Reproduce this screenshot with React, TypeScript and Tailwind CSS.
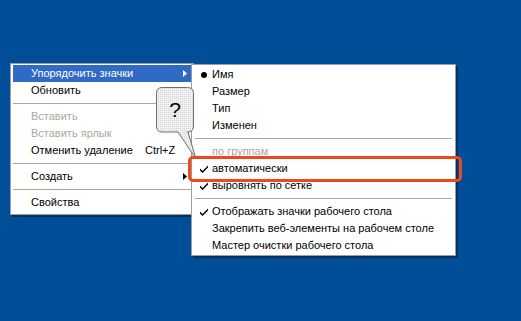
import type { ReactNode } from 'react';

type Item =
  | { sep: true }
  | { label: string; shortcut?: string; disabled?: boolean; submenu?: boolean; active?: boolean };

const desktopMenu: Item[] = [
  { label: 'Упорядочить значки', submenu: true, active: true },
  { label: 'Обновить' },
  { sep: true },
  { label: 'Вставить', disabled: true },
  { label: 'Вставить ярлык', disabled: true },
  { label: 'Отменить удаление', shortcut: 'Ctrl+Z' },
  { sep: true },
  { label: 'Создать', submenu: true },
  { sep: true },
  { label: 'Свойства' },
];

type SubItem = { sep: true } | { label: string; mark?: 'dot' | 'check'; disabled?: boolean };

const arrangeMenu: SubItem[] = [
  { label: 'Имя', mark: 'dot' },
  { label: 'Размер' },
  { label: 'Тип' },
  { label: 'Изменен' },
  { sep: true },
  { label: 'по группам', disabled: true },
  { label: 'автоматически', mark: 'check' },
  { label: 'выровнять по сетке', mark: 'check' },
  { sep: true },
  { label: 'Отображать значки рабочего стола', mark: 'check' },
  { label: 'Закрепить веб-элементы на рабочем столе' },
  { label: 'Мастер очистки рабочего стола' },
];

function Arrow({ white }: { white?: boolean }) {
  return (
    <svg width="4" height="7" viewBox="0 0 4 7" className="shrink-0">
      <path d="M0 0 L4 3.5 L0 7 Z" fill={white ? '#ffffff' : '#000000'} />
    </svg>
  );
}

function Check() {
  return (
    <svg width="8" height="8" viewBox="0 0 8 8">
      <path d="M0 3.5 L2.5 6 L8 0.5 L8 2.5 L2.5 8 L0 5.5 Z" fill="#000" />
    </svg>
  );
}

function Separator({ className }: { className: string }) {
  return (
    <div className="h-[9px] flex items-center">
      <div className={`h-px bg-[#aca899] ${className}`} />
    </div>
  );
}

function Menu({ className, children }: { className: string; children: ReactNode }) {
  return (
    <div
      className={`absolute bg-white border border-[#9d9d9d] shadow-[2px_2px_0_rgba(0,0,0,0.35)] ${className}`}
    >
      {children}
    </div>
  );
}

export default function App() {
  return (
    <div
      className="relative w-[521px] h-[321px] bg-[#004e98] overflow-hidden text-[11px] text-black"
      style={{ fontFamily: '"Liberation Sans", Arial, sans-serif' }}
    >
      {/* desktop context menu */}
      <Menu className="left-[10px] top-[63px] w-[184px] px-[2px] pt-[1px] pb-[3px]">
        {desktopMenu.map((item, i) =>
          'sep' in item ? (
            <Separator key={i} className="w-full" />
          ) : (
            <div
              key={i}
              className={`h-[17px] flex items-center pl-[18px] pr-[4px] ${
                item.active ? 'bg-[#316ac5] text-white' : ''
              } ${item.disabled ? 'text-[#aca899]' : ''}`}
            >
              <span className="w-[114px] shrink-0 whitespace-nowrap">{item.label}</span>
              <span className="flex-1 whitespace-nowrap">{item.shortcut}</span>
              {item.submenu && <Arrow white={item.active} />}
            </div>
          )
        )}
      </Menu>

      {/* arrange icons submenu */}
      <Menu className="left-[191px] top-[64px] w-[265px] px-[3px] py-[1px]">
        {arrangeMenu.map((item, i) =>
          'sep' in item ? (
            <Separator key={i} className="w-full" />
          ) : (
            <div
              key={i}
              className={`h-[17px] flex items-center whitespace-nowrap ${
                item.disabled ? 'text-[#aca899]' : ''
              }`}
            >
              <span className="w-[17px] flex justify-center items-center shrink-0">
                {item.mark === 'dot' && <span className="w-[6px] h-[6px] rounded-full bg-black" />}
                {item.mark === 'check' && <Check />}
              </span>
              <span>{item.label}</span>
            </div>
          )
        )}
      </Menu>

      {/* red highlight frame */}
      <div className="absolute left-[188px] top-[156px] w-[274px] h-[26px] border-[3px] border-[#f2461c] rounded-[5px]" />

      {/* callout bubble */}
      <svg className="absolute left-[150px] top-[82px]" width="52" height="82" viewBox="150 82 52 82">
        <defs>
          <pattern id="dots" width="2" height="2" patternUnits="userSpaceOnUse">
            <rect width="2" height="2" fill="#f0f0f0" />
            <rect width="1" height="1" fill="#d4d4d4" />
          </pattern>
        </defs>
        <path
          d="M162 87.5 H187.5 Q193.5 87.5 193.5 93.5 V126 Q193.5 132 187.5 132 H188 L196 159 L178 132 H162 Q156.5 132 156.5 126 V93.5 Q156.5 87.5 162 87.5 Z"
          fill="url(#dots)"
          stroke="#6f6f6f"
          strokeWidth="1"
        />
        <text
          x="175"
          y="117"
          textAnchor="middle"
          fontSize="21"
          fill="#000"
          style={{ fontFamily: '"Liberation Sans", Arial, sans-serif' }}
        >
          ?
        </text>
      </svg>
    </div>
  );
}
